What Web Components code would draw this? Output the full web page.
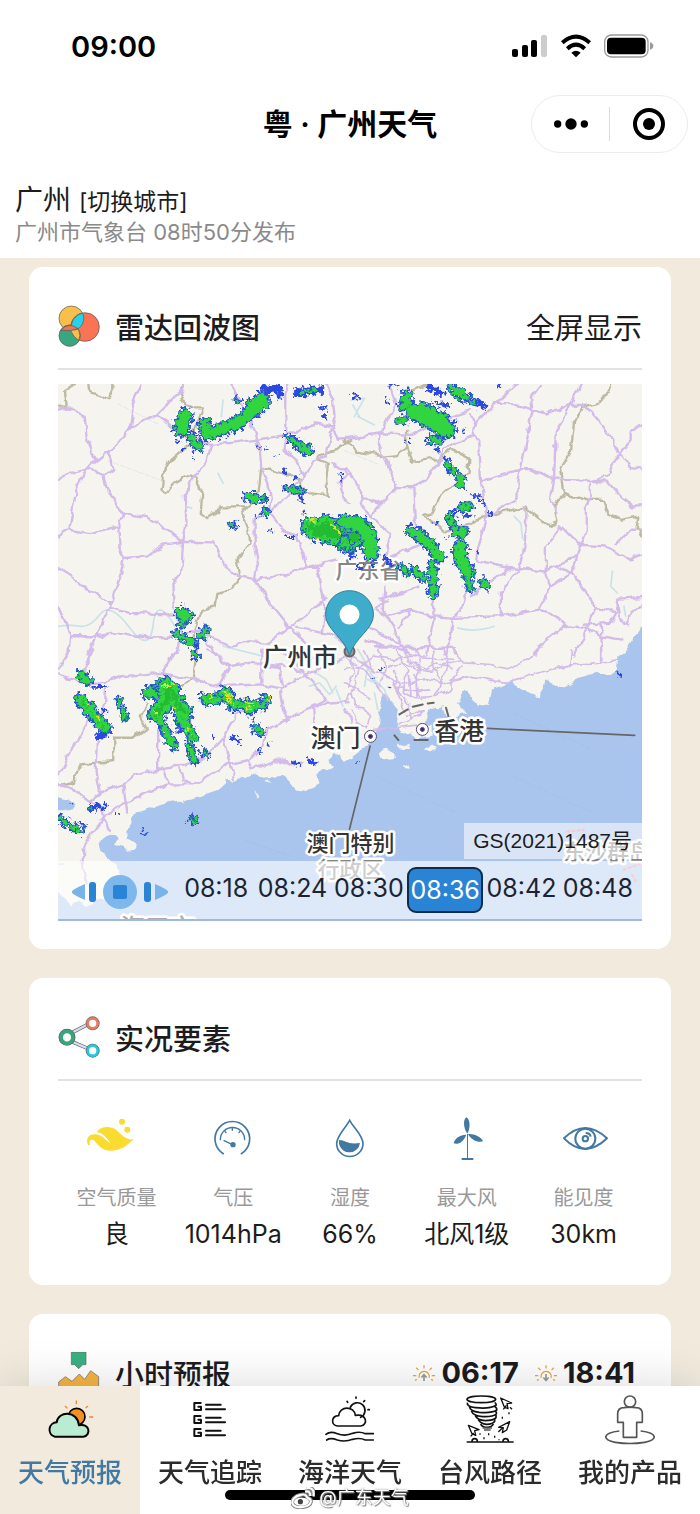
<!DOCTYPE html>
<html lang="zh-CN">
<head>
<meta charset="utf-8">
<meta name="viewport" content="width=device-width, initial-scale=1">
<title>粤 · 广州天气</title>
<style>
  html, body {
    margin: 0;
    height: 100%;
  }

  body {
    --sand: #f1eadd;
    --blue: #4179a3;
    --text: #1c1c1e;
    --muted: #8a8a8a;
    --line: #e2e2e2;
    color: var(--text);
    font-family: Inter, "Noto Sans CJK SC", sans-serif;
  }
</style>
</head>
<body>
<weather-app></weather-app>

<script>
const define = (name, html, setup) => {
  customElements.define(name, class extends HTMLElement {
    constructor () {
      super()
      this.attachShadow({ mode: 'open' })
    }

    connectedCallback () {
      this.shadowRoot.innerHTML = typeof html === 'function' ? html(this) : html
      setup?.(this)
    }
  })
}

// [viewBox, markup]
const icons = {
  signal: ['0 0 36 24', `
    <rect x="0" y="15" width="6" height="8" rx="2"/><rect x="10" y="11" width="6" height="12" rx="2"/>
    <rect x="19" y="6" width="6" height="17" rx="2"/><rect x="29" y="1" width="6" height="22" rx="2" fill="#ccc"/>`],
  wifi: ['0 0 90 70', `
    <g fill="none" stroke="#000" stroke-width="12"><path d="M4 25Q45 -11 86 25"/><path d="M19 43Q45 19 71 43"/></g>
    <path d="M31 55Q45 44 59 55L45 69z"/>`],
  battery: ['0 0 150 70', `
    <rect x="2" y="2" width="130" height="66" rx="20" fill="none" stroke="#999" stroke-width="4"/>
    <rect x="9" y="10" width="116" height="50" rx="12"/><path d="M138 24q10 3 10 11t-10 11z" fill="#999"/>`],
  more: ['0 0 104 36', '<circle cx="12" cy="18" r="11"/><circle cx="52" cy="18" r="17"/><circle cx="92" cy="18" r="11"/>'],
  target: ['0 0 32 32', '<circle cx="16" cy="16" r="14" fill="none" stroke="#000" stroke-width="4"/><circle cx="16" cy="16" r="6"/>'],
  venn: ['0 0 126 126', `
    <g stroke="#555" stroke-width="2">
      <circle cx="40" cy="40" r="37" fill="#f9bf4b"/><circle cx="81" cy="66" r="43" fill="#fb7355"/><circle cx="35" cy="92" r="32" fill="#38a67f"/>
      <path d="M76 30A37 37 0 0 1 41 77A43 43 0 0 1 73 24z" fill="#25d4ea"/>
      <path d="M8 76Q33 48 60 71L41 77z" fill="#ee7358"/>
      <path d="M38 76Q45 96 62 106Q70 92 61 72L50 75z" fill="#f9bf4b"/>
    </g>`],
  share: ['0 0 126 126', `
    <g stroke="#666" stroke-width="11"><path d="M30 56L96 22M30 72L96 100"/></g>
    <g stroke="#d5dff2" stroke-width="7"><path d="M30 56L96 22M30 72L96 100"/></g>
    <g fill="#fff" stroke="#666">
      <circle cx="27" cy="64" r="18" stroke-width="15"/><circle cx="104" cy="22" r="15" stroke-width="12"/><circle cx="104" cy="104" r="15" stroke-width="12"/>
      <circle cx="27" cy="64" r="18" stroke="#36a67c" stroke-width="11"/><circle cx="104" cy="22" r="15" stroke="#e97b61" stroke-width="8"/><circle cx="104" cy="104" r="15" stroke="#25c8df" stroke-width="8"/>
    </g>`],
  hourly: ['0 0 126 126', `
    <g stroke="#666" stroke-width="2"><path d="M40 0H84V38H74L62 50L50 38H40z" fill="#38b183"/>
    <path d="M2 126V90L22 74L42 88L64 66L80 82L98 56L122 74V126z" fill="#f5b544"/></g>`],
  sunrise: ['0 0 68 54', `
    <g fill="none" stroke="#e9a936" stroke-width="4"><path d="M19 42A16 16 0 1 1 50 42M0 35H10M58 35H68M34 3V13M10 11L17 18M58 11L51 18M12 47L6 50M56 47L62 50"/></g>
    <path d="M34 52V34M26 41L34 32L42 41" fill="none" stroke="#999" stroke-width="5"/>`],
  sunset: ['0 0 68 54', `
    <g fill="none" stroke="#e9a936" stroke-width="4"><path d="M19 42A16 16 0 1 1 50 42M0 35H10M58 35H68M34 3V13M10 11L17 18M58 11L51 18M12 47L6 50M56 47L62 50"/></g>
    <path d="M34 30V48M26 41L34 50L42 41" fill="none" stroke="#999" stroke-width="5"/>`],
  leaf: ['18 0 180 180', `
    <g fill="#fadb30"><circle cx="126" cy="38" r="9"/><circle cx="142" cy="62" r="9"/>
    <path d="M24 108C16 90 26 74 46 76C64 77 70 88 92 104C78 82 68 72 50 69C62 50 92 50 108 62C126 76 134 93 162 91C142 108 126 124 96 125C68 126 58 112 46 98C38 88 24 92 30 108z"/></g>`],
  gauge: ['369 0 180 180', `
    <g fill="none" stroke="#4179a3" stroke-width="5" stroke-linecap="round"><path d="M430 134A52 52 0 1 1 484 134"/>
    <path d="M421 92A36 36 0 1 1 494 92" stroke-width="4"/><path d="M457 58V64M435 67L438 71M480 67L477 71M432 95L456 106" stroke-width="4"/></g>
    <circle cx="459" cy="107" r="8" fill="#4179a3"/>`],
  drop: ['720 0 180 180', `
    <path d="M809 34C796 58 770 80 770 104A39 38 0 0 0 849 104C849 80 822 58 809 34z" fill="none" stroke="#4179a3" stroke-width="5"/>
    <path d="M777 93C794 92 802 108 840 102A32 32 0 0 1 777 105z" fill="#4179a3"/>`],
  turbine: ['21 0 180 180', `
    <g fill="#4179a3"><path d="M111 73C101 58 98 34 109 25C121 32 121 56 113 73z"/><path d="M109 77C99 101 84 107 71 103C73 88 93 76 109 77z"/>
    <path d="M115 75C134 74 154 84 159 97C143 102 124 92 115 77z"/><path d="M111 75H114V147H111zM95 147H130V153H95z"/></g>`],
  eye: ['372 0 180 180', `
    <g fill="none" stroke="#4179a3" stroke-width="6" stroke-linejoin="round"><path d="M402 88Q465 26 531 88Q465 152 402 88z"/>
    <circle cx="466" cy="89" r="30"/><circle cx="466" cy="89" r="8"/><path d="M467 72Q480 72 482 83"/></g>`],
  prev: ['0 0 26 24', '<path d="M14 4V20Q0 14 1 12Q0 10 14 4z" fill="#79b3e8"/><rect x="18" y="2" width="7" height="20" rx="3" fill="#2a84d5"/>'],
  stop: ['0 0 36 36', '<circle cx="18" cy="18" r="17" fill="#7db7eb"/><rect x="11" y="11" width="14" height="14" rx="2" fill="#2a84d5"/>'],
  next: ['0 0 26 24', '<path d="M12 4V20Q26 14 25 12Q26 10 12 4z" fill="#79b3e8"/><rect x="1" y="2" width="7" height="20" rx="3" fill="#2a84d5"/>'],
  pin: ['0 0 50 68', `
    <path d="M25 66C20 48 1 40 1 25A24 24 0 0 1 49 25C49 40 30 48 25 66z" fill="#3eaccb" stroke="#2b7f9b" stroke-width="1"/><circle cx="25" cy="25" r="10" fill="#fff"/>`],
  forecast: ['135 255 150 150', `
    <g stroke="#f08a24" stroke-width="4" stroke-linecap="round"><path d="M229 273V281M196 289L201 294M263 289L258 293M269 321H278"/></g>
    <circle cx="230" cy="320" r="25" fill="#f59120" stroke="#000" stroke-width="5"/>
    <path d="M164 380A22 22 0 0 1 170 337C174 302 232 300 237 346C270 338 274 377 250 380z" fill="#b9ecd1" stroke="#000" stroke-width="6" stroke-linejoin="round"/>`],
  track: ['555 255 150 150', `
    <g fill="none" stroke="#111" stroke-width="6" stroke-linecap="round" stroke-linejoin="round">
      <path d="M602 279H583V300H603V290H595M602 318H583V339H603V329H595M602 357H583V378H603V368H595"/>
      <path d="M618 284H662M618 298H675M618 323H662M618 337H675M618 362H662M618 376H675"/>
    </g>`],
  ocean: ['975 255 150 150', `
    <g fill="none" stroke="#111" stroke-width="5" stroke-linecap="round" stroke-linejoin="round">
      <path d="M1012 348C992 345 993 318 1016 317C1018 287 1063 287 1066 316C1100 310 1106 344 1082 348z"/>
      <path d="M1051 292A23 23 0 1 1 1082 322M1068 261V265M1041 274L1043 277M1094 272L1091 275M1104 299H1108"/>
      <path d="M978 373Q990 362 1012 371Q1035 380 1058 370Q1080 363 1096 371L1120 371M980 390Q992 382 1012 390Q1035 397 1058 388Q1080 382 1096 390L1120 390"/>
    </g>`],
  typhoon: ['345 255 150 150', `
    <g fill="none" stroke="#111" stroke-width="5" stroke-linejoin="round">
      <ellipse cx="394" cy="268" rx="43" ry="10"/>
      <path d="M352 278Q350 290 376 293Q418 298 438 286Q440 282 434 277M358 289Q360 304 388 307Q425 310 440 301Q442 294 434 289M364 303Q370 318 398 320Q430 321 439 312Q441 307 436 304M376 317Q382 331 406 332Q430 332 438 323V315M385 329Q392 342 410 343Q428 343 434 334V328M392 342Q396 352 412 352Q426 351 430 342"/>
      <path d="M398 354H426M402 360H422" stroke="#555"/>
      <path d="M452 264L485 279L471 281L474 296L463 291zM355 346L387 359L374 362L377 376L366 371zM479 335L446 352L460 353L457 368L470 360zM480 292L486 298M460 298L469 286M362 379L371 369M445 366L458 353" stroke-width="4"/>
      <path d="M350 396H491M366 394A8 8 0 0 1 382 394M459 394A8 8 0 0 1 475 394"/>
      <path d="M457 320V326M477 307V313M402 382V388M416 370V376M434 377V383M447 388V391M390 370V374" stroke-width="4"/>
    </g>`],
  product: ['765 255 150 150', `
    <g fill="none" stroke="#555" stroke-width="5" stroke-linejoin="round">
      <circle cx="840" cy="275" r="17"/>
      <path d="M822 293C808 293 803 300 803 312V337H820V382H860V337H877V312C877 300 870 293 858 293Q840 290 822 293z"/>
      <path d="M808 363C756 369 756 390 796 397Q840 404 884 397C924 390 924 369 872 363"/>
    </g>`],
  weibo: ['0 0 46 42', `
    <g fill="none" stroke="#888" stroke-width="8"><path d="M19 15C7 17 1 25 3 32C8 42 36 40 38 28C39 21 30 22 30 18C28 14 22 14 19 15zM27 9Q37 6 37 17M30 2Q46 0 43 18"/></g>
    <g fill="none" stroke="#fff" stroke-width="4"><path d="M19 15C7 17 1 25 3 32C8 42 36 40 38 28C39 21 30 22 30 18C28 14 22 14 19 15zM27 9Q37 6 37 17M30 2Q46 0 43 18"/></g>
    <ellipse cx="20" cy="28" rx="14" ry="8" fill="#fff"/><circle cx="18" cy="28" r="5" fill="#444"/>`]
}

define('app-icon', el => {
  const [box, markup] = icons[el.getAttribute('name')]
  return `
<style>
  :host { display: inline-flex; flex: none; }
  svg { width: 100%; height: 100%; }
</style>
<svg viewBox="${box}" aria-hidden="true">${markup}</svg>`
})

define('status-bar', `
<style>
  :host {
    display: flex;
    align-items: center;
    justify-content: space-between;
    height: 92px;
    padding: 0 46px 0 71px;
    color: #000;
  }
  time { font-size: 29px; font-weight: 600; }
  div { display: flex; align-items: center; gap: 13px; }
  .signal { width: 36px; height: 24px; }
  .wifi { width: 30px; height: 24px; }
  .battery { width: 50px; height: 24px; }
</style>
<time>09:00</time>
<div>
  <app-icon class="signal" name="signal"></app-icon>
  <app-icon class="wifi" name="wifi"></app-icon>
  <app-icon class="battery" name="battery"></app-icon>
</div>`)

define('nav-header', `
<style>
  :host {
    display: grid;
    grid-template-columns: 1fr auto 1fr;
    align-items: center;
    height: 64px;
    padding: 0 12px;
    color: #000;
  }
  h1 { margin: 0; grid-column: 2; font-size: 30px; line-height: 40px; font-weight: 600; }
  .capsule {
    justify-self: end;
    display: flex;
    align-items: center;
    box-sizing: border-box;
    width: 157px;
    height: 58px;
    border: 1px solid #ececec;
    border-radius: 29px;
  }
  button {
    flex: 1;
    display: flex;
    align-items: center;
    justify-content: center;
    height: 34px;
    padding: 0;
    border: 0;
    background: none;
  }
  button + button { border-left: 1px solid #ddd; }
  .more { width: 36px; height: 12px; }
  .target { width: 32px; height: 32px; }
</style>
<h1><slot></slot></h1>
<div class="capsule">
  <button aria-label="更多"><app-icon class="more" name="more"></app-icon></button>
  <button aria-label="关闭"><app-icon class="target" name="target"></app-icon></button>
</div>`)

define('city-header', `
<style>
  :host { display: block; padding: 26px 15px 14px; }
  h2 { margin: 0; font-size: 28px; line-height: 36px; font-weight: 400; }
  a { font-size: 23px; color: inherit; text-decoration: none; }
  p { margin: 0; font-size: 22px; line-height: 24px; color: var(--muted); }
</style>
<h2>广州 <a href="#city">[切换城市]</a></h2>
<p>广州市气象台 08时50分发布</p>`)

define('weather-card', el => `
<style>
  :host {
    display: block;
    padding: 0 29px 28px;
    border-radius: 14px;
    background: #fff;
  }
  header {
    display: flex;
    align-items: center;
    gap: 15px;
    height: 103px;
    padding-top: 16px;
    box-sizing: border-box;
    border-bottom: 2px solid var(--line);
  }
  app-icon { width: 42px; height: 42px; }
  h3 { flex: 1; margin: 0; font-size: 29px; font-weight: 500; }
</style>
<header>
  <app-icon name="${el.getAttribute('icon')}"></app-icon>
  <h3>${el.getAttribute('heading')}</h3>
  <slot name="extra"></slot>
</header>
<slot></slot>`)

// The map is drawn in four tiles at three units to the pixel.
const tiles = {
  nw: {
    origin: [-24, -12],
    roads: [
      'M275 12L250 65L240 145L205 190L172 215L130 250L100 285L75 350L58 450L24 470',
      'M24 90L60 82L108 115L112 165L135 240M24 300Q60 275 125 268L160 290L175 340L222 402L290 412L345 445L400 486L495 488L515 540L545 585L615 598L690 590L775 562L855 540',
      'M172 215L185 235L190 270L160 290M240 145L320 105L375 50L400 30L405 12M320 105L355 130L400 170L485 195L620 180L710 165L800 130L850 140L865 180L900 175',
      'M485 195L470 240L430 290L405 350L410 430L400 486L395 570L370 600L375 690M58 450L120 460L205 440L222 402M205 440L210 510L225 535L290 530L340 495L400 486',
      'M225 535L215 580L195 630L180 680L145 760L115 825M24 565L65 590L110 630L180 665L182 685L240 700L375 705',
      'M24 680L50 740L60 770L140 770L210 760L300 775L380 770L450 750L500 785L540 800L600 785L660 790L720 745L780 700L825 660M60 770L55 825',
      'M540 12L580 80L610 150L630 200L635 265L655 310L665 360L660 400L700 450L740 470L755 510L775 562L805 565L820 640L825 700L820 760',
      'M660 400L615 420L615 500L625 550L615 598L660 670L720 745L770 790L800 825M710 12L710 165L705 210L740 240L765 290L715 340L690 370L660 400',
      'M830 12L850 50L855 110L845 150L830 230L790 245L765 290M845 250L890 280L870 310L885 360L900 375M470 790L500 825M375 705L395 760L380 825M740 745L850 765L890 800'
    ],
    borders: [
      'M75 12L45 30L50 80L24 80M115 12L118 38L150 45L175 58L190 30L190 12',
      'M405 12L393 40L405 75L430 85L460 85L450 110L440 135L425 190L400 210L365 240L340 290L335 330L350 340L370 310L410 285L440 290L455 330L450 400L475 415L500 400L510 380L590 380L575 400L590 440L600 490L560 540L570 595L545 630L500 640L495 680L460 690L440 740L430 775L440 825',
      'M590 380L625 350L635 265L690 275L750 295L770 340L835 345L830 300L835 255L800 240L810 228L850 215L900 182'
    ],
    rivers: ['M24 740Q60 735 90 740T150 705T240 745T310 735T375 740M520 60L515 110M505 280L520 310M410 380L425 385M470 790L480 740M520 800L640 830']
  },
  ne: {
    origin: [861, -12],
    roads: [
      'M135 12L155 70L130 120L108 165L105 215L125 235L140 280L160 325L110 370L80 410L140 460L130 500L120 540M0 175L110 160L200 165L285 125L360 100L380 85',
      'M515 12L470 55L390 135L380 100M390 135L385 165L405 185L410 300L415 350L430 410L400 510L395 545L495 565L600 575L650 550L700 525',
      'M385 165L300 205L280 250L240 300L210 325L160 325M590 12L560 50L565 95L545 180L520 300L520 360L435 405',
      'M450 68L490 70L560 90L605 100L680 75L720 75L740 95L780 140L830 220L860 265L900 270M710 12L680 75L635 155L630 290L620 370L640 400',
      'M900 138L860 150L860 180L830 220L785 290L740 305L740 350M410 310L450 290L530 268L560 268L615 292L660 300L790 305L830 350L870 380L900 380',
      'M740 350L725 380L725 450L700 520M650 440L705 495L780 500L820 515L855 540L900 520M900 450L860 450L820 490',
      'M540 380L550 400L545 480L525 565L495 600L470 640L470 710M650 440L605 500L605 575L620 620L685 580L700 525M640 560L685 580L755 685L815 695',
      'M620 620L585 690L470 710L330 715L265 710L200 690L130 710L95 690M585 690L620 700L660 735L720 745L770 770L835 780',
      'M660 735L600 790L570 825M755 685L730 745L690 825M770 735L775 825M720 735L800 730L815 695L820 660L900 655M820 660L825 720L855 740L860 700L900 670',
      'M120 620L115 690L150 740L165 790L200 825M110 660L220 620M210 325L215 440M50 350L110 370M0 265L45 320L50 380L80 410M265 650L268 720L245 825M380 600L360 650L350 690L325 715L320 770L300 825',
      'M495 565L430 610L380 650M60 740L165 790M165 745L200 690M90 800L330 805L335 825M240 490L140 530M90 690L130 665M60 780L220 825'
    ],
    borders: [
      'M805 12L775 65L720 80L690 125L680 215L650 260L660 340L630 375L640 430L615 440L540 380L490 395L440 405L380 430L300 455L260 420L235 410L265 400L290 345L340 300L370 280L372 235L320 210L285 235L205 245L185 195L185 150',
      'M660 340L735 360L775 360L790 405L835 420L880 410L875 440L892 470M0 182L40 215L120 230L160 225L185 195M200 35L250 12'
    ],
    rivers: ['M340 745Q390 760 450 740M510 410L530 430L535 475M805 575L800 620L820 640M840 680L845 710M20 60L60 55L40 90L30 110M40 110L90 135M25 75L45 110']
  },
  sw: {
    origin: [-24, 798],
    roads: [
      'M24 75L60 85L110 105L165 100L220 80L330 70L430 90L510 110L630 105L690 120L770 75L810 60L900 20M130 0L100 60L110 105M60 0L24 60',
      'M165 120L160 190L145 240L140 370L150 430M24 375L60 310L110 225L120 180M24 405L70 420L120 455L150 430L220 405L250 380L330 360L400 350L460 330L520 265L560 190L620 180',
      'M150 510L215 465L290 430L350 405L430 405L480 380L540 345L600 330L640 290L650 240L690 220L750 190L830 160L900 155',
      'M325 240L325 355L340 360L355 405M390 350L400 395L430 405M220 405L232 490M520 265L540 340L555 390M595 335L605 360L640 350L690 330L720 345L760 340',
      'M120 455L155 475L160 510L130 550L100 600L98 640L110 700M160 510L180 545M380 0L340 70M475 0L540 50L600 40L700 50L760 65M540 50L510 110M635 0L635 100M690 120L700 180L715 215M770 75L800 110L830 150L790 170L795 230',
      'M690 0L720 30L770 75M640 50L690 55L700 110M740 0L800 30L860 40'
    ],
    borders: ['M440 20L430 80L400 110M290 160L270 200L290 235L250 265L190 265L190 335L90 345L75 400L24 410'],
    rivers: ['M780 110L810 100L840 135L860 110M800 70L830 90L850 130M880 170L860 120M24 645H40']
  },
  se: {
    origin: [861, 798],
    roads: [
      'M0 20L60 60L100 110L130 150M0 100L30 115L0 160M20 120L30 165L60 170L80 200L65 235L40 215L20 180M45 50L30 115L75 150',
      'M150 0L190 60L180 130L210 145L280 140L320 120L320 90L380 80L450 95L490 98L620 60L680 50L820 35M330 0L360 40L440 45L490 55L550 30L575 0',
      'M680 50L685 0M770 45L770 0M140 90Q180 115 215 95T290 105L380 80M130 50Q170 30 215 55T300 45L350 35M210 0Q240 40 222 80T235 150M270 0Q255 40 280 75T270 140M355 50L320 90',
      'M160 80L150 110L190 165M180 195L240 190L215 205L165 225M85 240L160 235L230 225M60 0L85 60L140 90L165 150L180 180M100 0L120 50L110 110M180 0L200 40L250 60L280 40L320 60',
      'M0 60L50 50L90 20L150 30L200 20L330 30M0 0L40 30L90 60M195 80L200 140M215 75L218 145M160 115L200 125L250 118M300 0L310 50L290 100M150 60L165 100L160 140M195 165L200 210M20 20L30 70L10 110M0 180L20 210L40 250'
    ],
    borders: [],
    rivers: ['M60 40L90 90L120 120L130 150M40 0L70 50L60 110M90 130L100 180M70 90L110 110']
  }
}

const sea = `
  M200 650L150 600L145 580L170 560L190 555L210 565L190 585L240 605L255 600L250 580L230 570L240 530L260 490L290 480L340 465L400 455L450 440L510 420L530 400L525 375L550 400L600 375L640 385
  L700 380L720 400L740 420L780 420L810 405L800 375L850 350L840 330L860 310L885 340L925 310L960 280L985 240L990 180L1005 130L1020 150L1045 180L1040 220L1055 250L1075 255L1115 235L1145 180L1185 170
  L1190 200L1215 200L1250 190L1225 160L1245 120L1285 165L1315 170L1325 120L1385 100L1445 135L1475 140L1485 90L1545 120L1585 85L1645 70L1675 80L1700 65L1705 20L1735 0L1777 -60L1840 -90V860H0V700L60 770L80 760
  L110 770L150 750L180 760L230 740L220 690zM0 450H24L75 460L60 480H0z`

const islands = `
  M720 400L745 385L760 395L770 370L790 380L800 400L770 425L735 420zM650 395L660 390L665 400zM520 375L535 378L530 385zM615 430L630 440L620 445zM385 460L400 450L405 462z
  M1050 238L1100 225L1150 230L1150 262L1100 270L1085 250zM985 305L1010 298L1035 312L1040 325L1010 330L990 320zM1040 290L1080 280L1085 295L1055 305zM1120 300L1150 285L1165 292L1140 308zM1060 355L1075 345L1078 358zM1180 175L1200 160L1220 190L1225 205L1195 200z
  M175 560L200 550L210 560z`

// Rain cells: [path, width, core]; core 0 is drizzle only, 2 adds heavy rain.
const cells = {
  nw: [
    ['M405 110L395 145', 34, 1], ['M428 175L445 198', 18, 1], ['M465 130L470 165', 22, 1], ['M485 160L570 125L610 90L640 60', 28, 1], ['M615 80L635 65', 40, 1], ['M622 110h1', 8, 0],
    ['M640 25L690 30', 22, 0], ['M690 12V50', 14, 0], ['M745 40L810 28', 26, 0], ['M760 35L800 30', 5, 1], ['M810 84h16M826 108v4M562 65h6', 8, 0], ['M562 62h4', 4, 1],
    ['M712 170L745 190', 7, 1], ['M752 202L772 212', 18, 1], ['M590 350L645 358', 6, 1], ['M610 355h8', 14, 1], ['M700 275h6M735 292h6', 9, 0], ['M710 325L755 335', 5, 1], ['M750 345l8 20', 5, 0],
    ['M645 398h4', 10, 1], ['M543 435h8', 3, 1], ['M560 444h6M626 202h4M650 206h8M680 228h3M658 452h4M712 472h20M762 398h1M618 415h2M870 285l8 12M432 238h1', 3, 0], ['M388 184h2M395 210h3', 8, 0],
    ['M785 440L800 455', 46, 2], ['M825 450L910 470', 62, 2], ['M880 495L900 505', 24, 2], ['M830 425L835 430', 30, 2],
    ['M395 700L410 710', 26, 1], ['M395 730h3', 10, 1], ['M378 762L430 790', 10, 1], ['M440 795v20', 8, 0], ['M455 770L468 750', 12, 1]
  ],
  ne: [
    ['M188 45L180 80', 22, 1], ['M210 95L310 150', 40, 1], ['M235 95L285 125', 46, 1], ['M262 180L285 182', 14, 1], ['M165 122h14', 9, 1], ['M255 22L290 40', 18, 0], ['M268 66L310 78', 6, 0],
    ['M325 25L360 50', 18, 1], ['M360 55L420 78', 20, 0], ['M375 60L395 70', 6, 1], ['M28 42l10 14M122 50v3M122 66l10 4M275 210h8M135 15h16M460 15h8M270 432h5M330 126h4M358 154h4M192 182h1M305 478h1', 7, 0],
    ['M300 235h3', 9, 0], ['M308 250l4 8M322 272h5', 7, 1], ['M348 292v20', 14, 1], ['M355 385L375 378', 14, 1], ['M385 350L405 350L420 375M435 400l2 4', 5, 0], ['M318 412L322 425', 16, 1], ['M335 455L355 458', 20, 1], ['M365 410h12M325 400l20 -10M400 515h2', 7, 0],
    ['M348 500L350 540L372 580', 28, 1], ['M368 590L378 625', 10, 1], ['M412 602L430 620', 8, 1], ['M195 450L250 485L285 535', 18, 1], ['M225 465L245 485', 24, 1], ['M208 572L235 595', 12, 1], ['M262 555L268 600L265 640', 14, 1],
    ['M172 560L185 580', 8, 1], ['M120 530l20 25M40 560h3M85 560v3M20 530h14', 8, 0], ['M0 430L40 430L70 460L80 520', 34, 1], ['M0 480L10 500', 16, 2], ['M0 490h4', 16, 2]
  ],
  sw: [
    ['M95 78L112 95', 18, 1], ['M130 112h40', 8, 0], ['M92 150L130 195L165 235', 24, 2], ['M145 262L180 250', 14, 0], ['M160 185h20', 4, 0], ['M205 150L218 185L228 205', 5, 1],
    ['M300 130h3', 30, 1], ['M345 105L355 150L318 195', 36, 2], ['M365 120L380 160L405 190', 34, 2], ['M330 210L355 260L372 290', 14, 1], ['M385 200L415 235L430 265', 18, 2], ['M415 290L435 330', 11, 1], ['M385 245h6', 14, 0], ['M462 308l8 8', 6, 1],
    ['M470 148L500 150', 24, 2], ['M525 128L550 165', 24, 2], ['M575 165L640 168', 18, 2], ['M595 180h4', 20, 2], ['M645 140L660 155', 8, 1], ['M615 235L635 250', 9, 1], ['M545 262L572 282', 7, 0], ['M488 262h1M612 212h1M625 300l4 6M435 345v2M655 285h1M205 495h1M65 462h1M165 462v16', 5, 0],
    ['M730 335l14 8M770 330l25 10', 8, 0], ['M120 475L150 470', 12, 0], ['M125 478h1', 4, 1], ['M30 508L60 530L95 545', 8, 1], ['M92 522l15 6', 4, 0], ['M425 508l8 8', 7, 1], ['M275 540h6M280 555h8', 3, 0], ['M430 12l8 8', 9, 1]
  ],
  se: [['M818 70l12 12', 5, 0], ['M110 58h1M115 148h1M88 84h3M138 114h1M38 340h2', 3, 0]]
}

const heavy = {
  nw: 'M780 422L795 425M845 432L860 448L880 465M800 480l6 2',
  sw: 'M108 165l8 4M140 205l10 8M340 110h25M370 180h10M318 195v-10M410 235l12 8M480 140h4M525 128l20 12M532 150l14 10M590 160h20M592 178h6M658 150h3'
}

const drawTile = ([name, { origin, roads, borders, rivers }]) => `
  <g transform="translate(${origin})">
    <path d="${rivers.join('')}" stroke="#c9e2ea" stroke-width="5"/>
    <path d="${borders.join('')}" stroke="#bdb9a3" stroke-width="7" filter="url(#wobble)"/>
    <path d="${roads.join('')}" stroke="#d3bce9" stroke-width="${name === 'se' ? 5 : 7}" filter="url(#wobble)"/>
  </g>`

const drawRain = ([name, list]) => {
  const stroke = (keep, grow, color) => list.filter(c => keep(c[2])).map(([d, w]) =>
    `<path d="${d}" stroke="${color}" stroke-width="${Math.max(w + grow, 3)}"/>`).join('')
  return `
  <g transform="translate(${tiles[name].origin})" filter="url(#ragged)">
    ${stroke(core => core === 0, 3, '#2b48e0')}
    ${stroke(core => core > 0, 17, '#2b48e0')}
    ${stroke(core => core > 0, 8, '#20a07c')}
    ${stroke(core => core > 0, 3, '#30d540')}
    ${stroke(core => core > 1, -20, '#23bb33')}
    <path d="${heavy[name] ?? ''}" stroke="#e3e02a" stroke-width="7"/>
  </g>`
}

define('radar-map', `
<style>
  :host { display: block; margin-top: 14px; position: relative; }
  .map { display: block; width: 100%; background: #f5f4ee; }
  text {
    font-family: "Noto Sans CJK SC", sans-serif;
    font-weight: 500;
    fill: #333;
    stroke: #fff;
    stroke-width: 5px;
    stroke-linejoin: round;
    paint-order: stroke;
  }
  .faint { fill: #858585; }
  .big { font-size: 25px; }
  .small { font-size: 22px; }
  .over { position: absolute; inset: auto 0 0; display: flex; flex-direction: column; align-items: end; }
  .licence {
    padding: 0 10px 0 9px;
    margin-bottom: 2px;
    font: 21px/36px "Liberation Sans", "Noto Sans CJK SC", sans-serif;
    background: #ffffff8c;
  }
</style>
<svg class="map" viewBox="0 0 585 538" role="img" aria-label="雷达回波图">
  <defs>
    <filter id="ragged" x="-20%" y="-20%" width="140%" height="140%" color-interpolation-filters="sRGB">
      <feTurbulence type="fractalNoise" baseFrequency=".08" numOctaves="3" seed="4"/>
      <feDisplacementMap in="SourceGraphic" scale="34" xChannelSelector="R" yChannelSelector="G"/>
    </filter>
    <filter id="wobble" x="-5%" y="-5%" width="110%" height="110%" color-interpolation-filters="sRGB">
      <feTurbulence type="fractalNoise" baseFrequency=".03" numOctaves="2" seed="9"/>
      <feDisplacementMap in="SourceGraphic" scale="22" xChannelSelector="R" yChannelSelector="G"/>
    </filter>
  </defs>
  <g transform="scale(.33333)" fill="none" stroke-linejoin="round" stroke-linecap="round">
    <g transform="translate(-24 798)" filter="url(#wobble)"><path d="${sea}" fill="#aac5ed"/><path d="${islands}" fill="#f5f4ee"/></g>
    ${Object.entries(tiles).map(drawTile).join('')}
    <g stroke="#666" stroke-width="5" transform="translate(861 798)"><path d="M430 237L872 258M77 290L15 540"/>
      <path d="M165 195L190 180M205 172L235 165M250 162L268 160M305 175L312 200M150 258L162 272M210 272H250" stroke-width="6"/></g>
    <g stroke="#8aa0c8" stroke-width="2" opacity=".25" stroke-dasharray="14 6"><path d="M960 1180L1200 1290M1370 1180L1610 1290M1370 990L1610 1100M560 1370L700 1420M180 60L300 120M860 200L960 240M150 230L310 290"/></g>
    <g stroke="#f08a94" stroke-width="7" stroke-dasharray="6 10"><path d="M1530 1345L1580 1340M1700 1460L1755 1440M1725 1475L1740 1500"/></g>
  </g>
  <text class="small faint" x="278" y="194">广东省</text>
  <g transform="scale(.33333)" fill="none" stroke-linejoin="round" stroke-linecap="round">
    ${Object.entries(cells).map(drawRain).join('')}
  </g>
  <text class="big" x="205" y="282">广州市</text>
  <text class="big" x="253" y="364">澳门</text>
  <text class="big" x="377" y="357">香港</text>
  <text class="small" x="249" y="468">澳门特别</text>
  <text class="small faint" x="260" y="494">行政区</text>
  <text class="small faint" x="506" y="477">东沙群岛</text>
  <text class="big" x="62" y="554">海口市</text>
  <g fill="#fff" stroke="#554a70" stroke-width="1">
    <circle cx="313" cy="353" r="6"/><circle cx="365" cy="346" r="6"/><circle cx="49" cy="543" r="6"/>
    <circle cx="292" cy="268" r="5" fill="#999" stroke="#666" stroke-width="2"/>
    <g fill="#3d2470"><circle cx="313" cy="353" r="2"/><circle cx="365" cy="346" r="2"/></g>
  </g>
  <svg x="267" y="206" width="50" height="68" viewBox="0 0 50 68">${icons.pin[1]}</svg>
</svg>
<div class="over">
  <span class="licence">GS(2021)1487号</span>
  <time-line></time-line>
</div>`)

define('time-line', `
<style>
  :host {
    display: flex;
    align-items: center;
    align-self: stretch;
    height: 58px;
    padding: 0 6px 0 12px;
    border-bottom: 2px solid #9fb8e0;
    background: #ffffff99;
  }
  button { padding: 0; border: 0; background: none; color: #1b2433; font: inherit; }
  .player { display: flex; align-items: center; gap: 4px; margin-right: 8px; padding-top: 4px; }
  .player button { display: flex; }
  .step { width: 28px; height: 24px; }
  .stop { width: 36px; height: 36px; }
  .times { flex: 1; display: grid; grid-template-columns: repeat(6, 1fr); align-items: center; }
  .times button { height: 46px; padding-bottom: 5px; font-size: 25px; border-radius: 9px; }
  .times .on { padding-bottom: 0; border: 2px solid #0d2c4b; background: #2a84d5; color: #fff; }
</style>
<div class="player">
  <button aria-label="上一帧"><app-icon class="step" name="prev"></app-icon></button>
  <button aria-label="停止"><app-icon class="stop" name="stop"></app-icon></button>
  <button aria-label="下一帧"><app-icon class="step" name="next"></app-icon></button>
</div>
<div class="times"></div>`, el => {
  const times = el.shadowRoot.querySelector('.times')
  for (const t of ['08:18', '08:24', '08:30', '08:36', '08:42', '08:48']) {
    const button = document.createElement('button')
    button.textContent = t
    button.className = t === '08:36' ? 'on' : ''
    button.onclick = () => {
      times.querySelector('.on').className = ''
      button.className = 'on'
    }
    times.append(button)
  }
})

define('live-item', el => `
<style>
  :host { display: flex; flex-direction: column; align-items: center; white-space: nowrap; }
  app-icon { width: 60px; height: 60px; }
  span { margin-top: 15px; font-size: 20px; line-height: 28px; color: #999; }
  strong { font-size: 25px; line-height: 44px; font-weight: 400; }
</style>
<app-icon name="${el.getAttribute('icon')}"></app-icon>
<span>${el.getAttribute('label')}</span>
<strong><slot></slot></strong>`)

define('tab-item', el => `
<style>
  :host { flex: 1; display: flex; }
  a {
    flex: 1;
    display: flex;
    flex-direction: column;
    align-items: center;
    padding-top: 9px;
    color: #2b2b2b;
    font-size: 26px;
    line-height: 36px;
    font-weight: 500;
    text-decoration: none;
    white-space: nowrap;
  }
  :host([active]) a { background: var(--sand); color: var(--blue); }
  app-icon { width: 50px; height: 50px; margin-bottom: 10px; }
</style>
<a href="#${el.getAttribute('icon')}"><app-icon name="${el.getAttribute('icon')}"></app-icon><slot></slot></a>`)

define('tab-bar', `
<style>
  :host {
    position: relative;
    flex: none;
    display: flex;
    height: 128px;
    background: #fff;
    box-shadow: 0 0 50px #00000026;
  }
  .home {
    position: absolute;
    inset: auto 0 14px;
    margin: 0 auto;
    width: 250px;
    height: 10px;
    border-radius: 5px;
    background: #000;
  }
  .mark {
    position: absolute;
    inset: auto 0 4px;
    display: flex;
    align-items: center;
    justify-content: center;
    gap: 4px;
    font-size: 18px;
    line-height: 24px;
    color: #fff;
    text-shadow: 0 0 2px #777, 1px 1px 1px #888;
    pointer-events: none;
  }
  .mark app-icon { width: 24px; height: 22px; }
</style>
<slot></slot>
<div class="home"></div>
<div class="mark"><app-icon name="weibo"></app-icon>@广东天气</div>`)

define('weather-app', `
<style>
  :host { display: flex; flex-direction: column; height: 100%; background: #fff; }
  main {
    flex: 1;
    min-height: 0;
    display: flex;
    flex-direction: column;
    gap: 29px;
    padding: 9px 29px 29px;
    overflow: auto;
    scrollbar-width: none;
    background: var(--sand);
  }
  weather-card { flex: none; }
  .full { font-size: 29px; color: inherit; text-decoration: none; }
  .live { display: grid; grid-template-columns: repeat(5, 1fr); padding: 28px 0 1px; }
  .sun { display: flex; align-items: center; gap: 6px; padding-right: 7px; font-size: 29px; font-weight: 700; }
  .sun app-icon { width: 22px; height: 18px; }
  .sun time + app-icon { margin-left: 10px; }
  .hours { height: 240px; }
</style>
<status-bar></status-bar>
<nav-header>粤 · 广州天气</nav-header>
<city-header></city-header>
<main>
  <weather-card icon="venn" heading="雷达回波图">
    <a class="full" slot="extra" href="#fullscreen">全屏显示</a>
    <radar-map></radar-map>
  </weather-card>
  <weather-card icon="share" heading="实况要素">
    <div class="live">
      <live-item icon="leaf" label="空气质量">良</live-item>
      <live-item icon="gauge" label="气压">1014hPa</live-item>
      <live-item icon="drop" label="湿度">66%</live-item>
      <live-item icon="turbine" label="最大风">北风1级</live-item>
      <live-item icon="eye" label="能见度">30km</live-item>
    </div>
  </weather-card>
  <weather-card icon="hourly" heading="小时预报">
    <div class="sun" slot="extra">
      <app-icon name="sunrise"></app-icon><time>06:17</time>
      <app-icon name="sunset"></app-icon><time>18:41</time>
    </div>
    <div class="hours"></div>
  </weather-card>
</main>
<tab-bar>
  <tab-item icon="forecast" active>天气预报</tab-item>
  <tab-item icon="track">天气追踪</tab-item>
  <tab-item icon="ocean">海洋天气</tab-item>
  <tab-item icon="typhoon">台风路径</tab-item>
  <tab-item icon="product">我的产品</tab-item>
</tab-bar>`)
</script>
</body>
</html>
